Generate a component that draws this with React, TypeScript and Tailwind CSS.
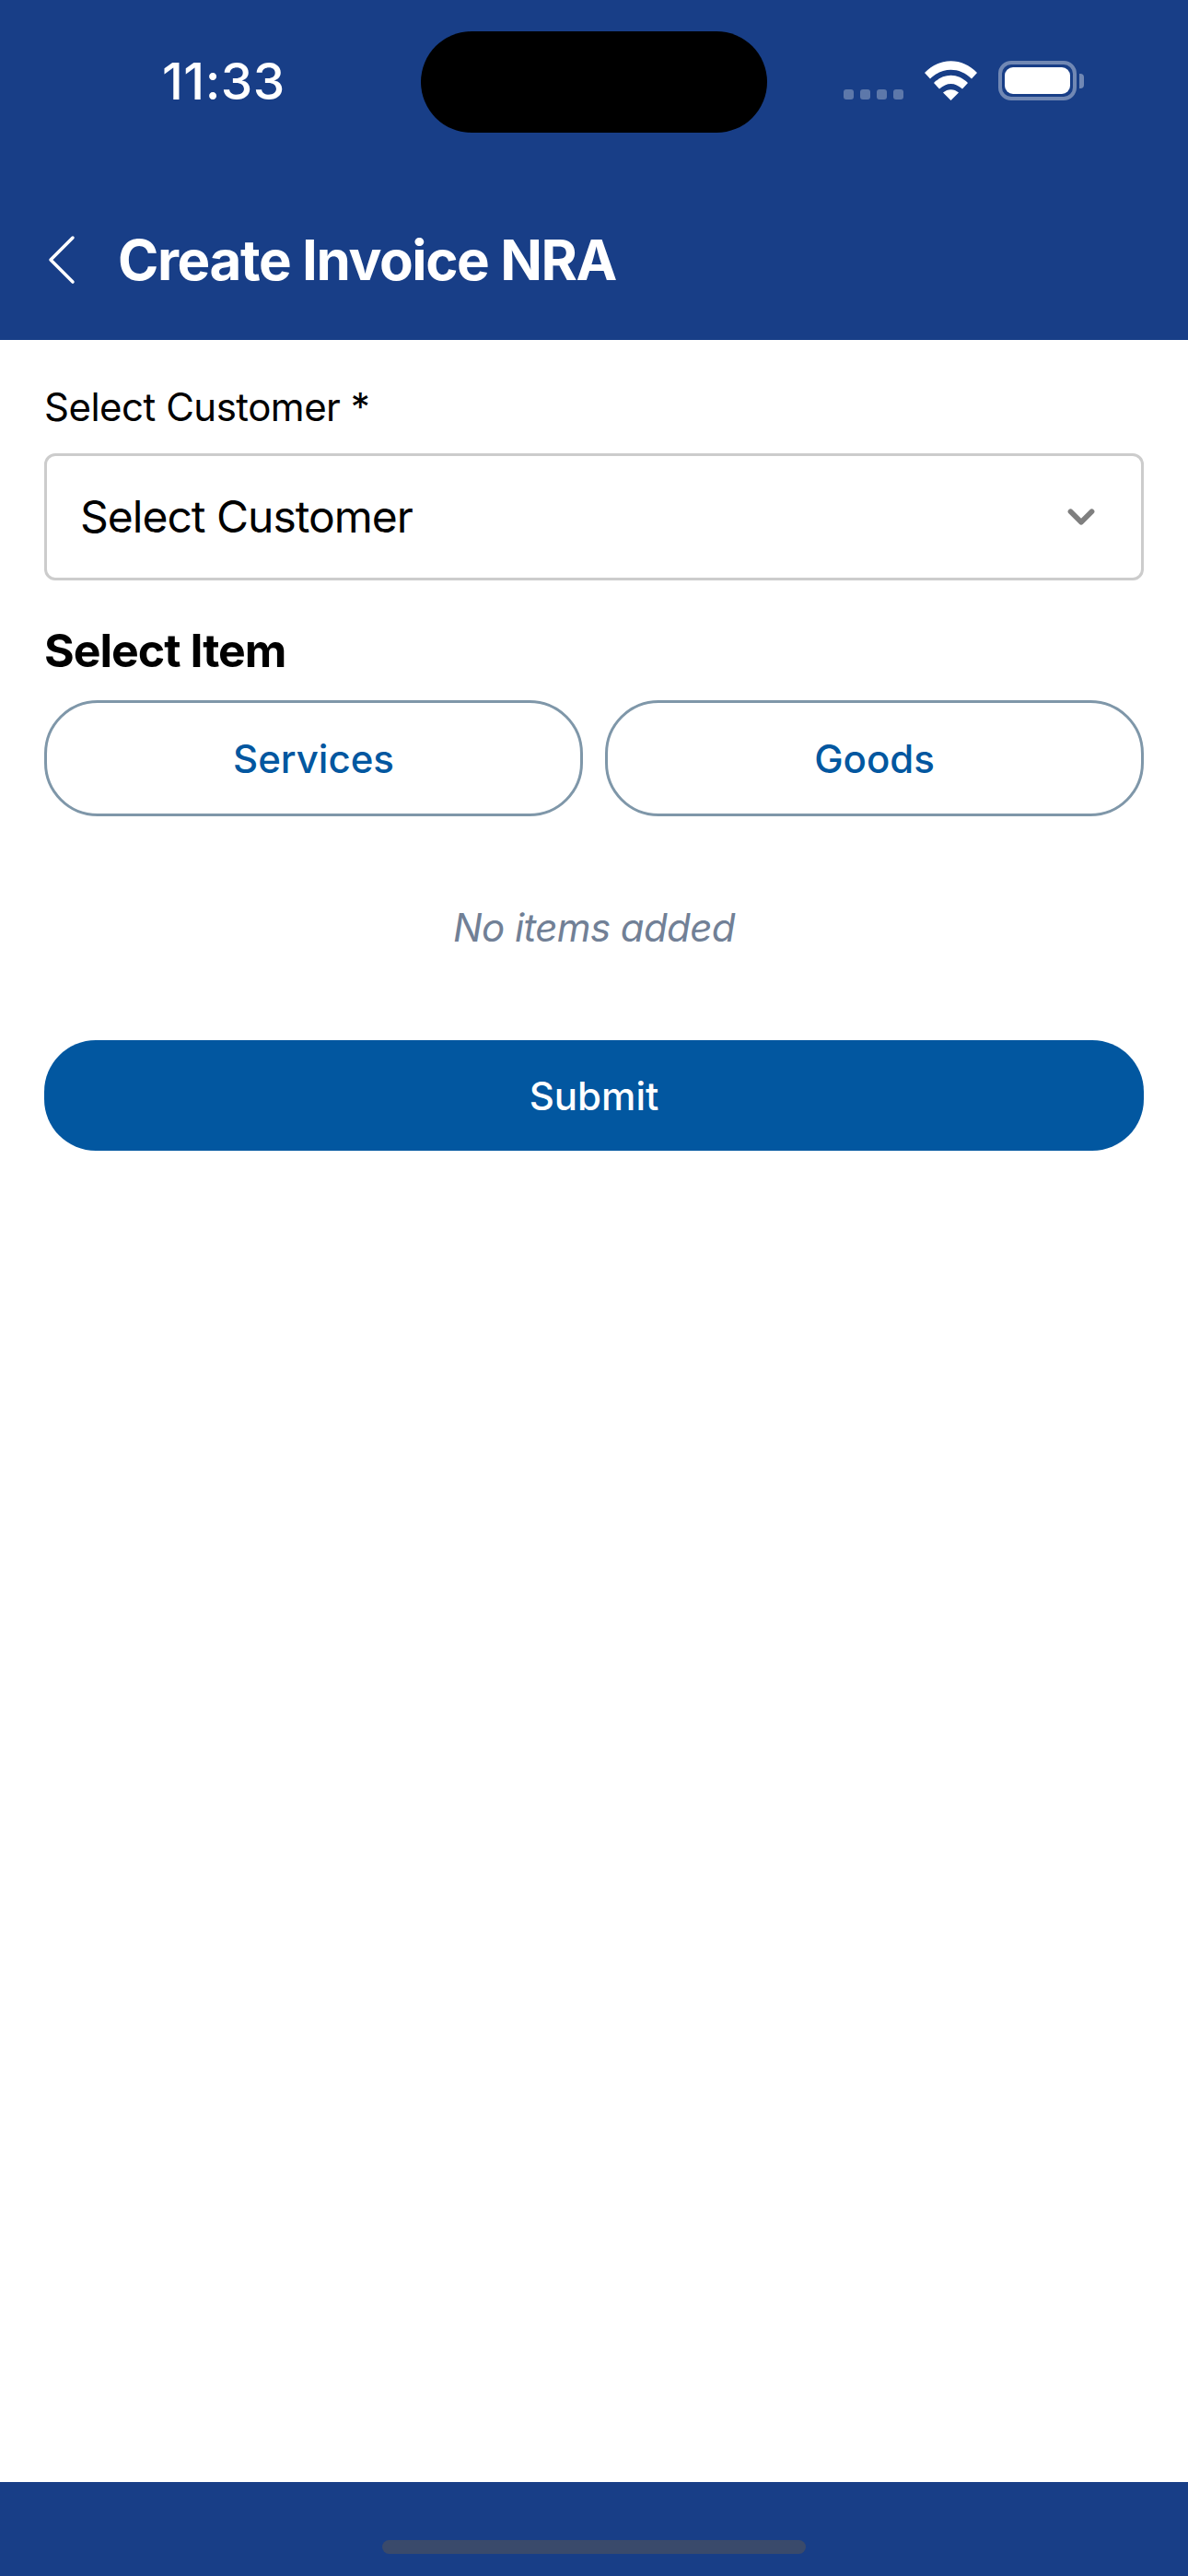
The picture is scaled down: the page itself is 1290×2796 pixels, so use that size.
import { ChevronDown } from "lucide-react"

function StatusBar() {
    return (
        <div className="flex items-center h-[110px] mt-[34px] pl-[176px]">
            <p className="text-[55px] font-medium text-white w-[281px] leading-none tracking-[0.5px] mb-[2px]">11:33</p>
            <div className="w-[376px] h-[110px] bg-black rounded-[55px]"></div>
            <div className="flex items-end ml-[83px] h-[43px] mb-[4px]">
                <div className="flex gap-[7px] mb-[1px]">
                    <div className="w-[11px] h-[11px] rounded-[3px] bg-[#5d78aa]"></div>
                    <div className="w-[11px] h-[11px] rounded-[3px] bg-[#5d78aa]"></div>
                    <div className="w-[11px] h-[11px] rounded-[3px] bg-[#5d78aa]"></div>
                    <div className="w-[11px] h-[11px] rounded-[3px] bg-[#5d78aa]"></div>
                </div>
                <svg className="ml-[23px]" width="57" height="43" viewBox="0 0 57 43" fill="#fff">
                    <path d="M0 13 C16 -4 41 -4 57 13 L51 19.5 C38 6.5 19 6.5 6 19.5 Z" />
                    <path d="M10 24 C21 13 36 13 47 24 L41 30.5 C33 23 24 23 16 30.5 Z" />
                    <path d="M20 34.5 C25 30 32 30 37 34.5 L28.5 43 Z" />
                </svg>
                <div className="ml-[23px] w-[85px] h-[43px] rounded-[14px] border-[4px] border-[#7188b4] p-[3px]">
                    <div className="w-full h-full bg-white rounded-[9px]"></div>
                </div>
                <div className="ml-[3px] mb-[13px] w-[5px] h-[16px] rounded-r-[4px] bg-[#7188b4]"></div>
            </div>
        </div>
    )
}

export default function App() {
    return (
        <div className="flex flex-col h-[2796px] bg-white font-['Inter',sans-serif]">
            <div className="bg-[#183e87] h-[369px]">
                <StatusBar />
                <div className="flex items-center mt-[108px] pl-[52px]">
                    <svg width="30" height="54" viewBox="0 0 30 54" fill="none" stroke="#fff" strokeWidth="3.5" strokeLinecap="round" strokeLinejoin="round">
                        <path d="M27 3 L3 27 L27 51" />
                    </svg>
                    <p className="text-[60px] font-bold text-white leading-none ml-[46px] tracking-[-1.4px]">Create Invoice NRA</p>
                </div>
            </div>

            <div className="px-[48px] flex flex-col">
                <p className="text-[42px] text-black leading-none mt-[52px] tracking-[-0.5px]">Select Customer *</p>
                <div className="flex items-center justify-between h-[138px] mt-[29px] border-[3px] border-[#cccccc] rounded-[12px] pl-[36px] pr-[48px]">
                    <p className="text-[48px] text-black leading-none tracking-[-1px]">Select Customer</p>
                    <ChevronDown className="text-[#7f7f7f] w-[46px] h-[46px] -mr-[6px]" strokeWidth={3} />
                </div>
                <p className="text-[50px] font-bold text-black leading-none mt-[51px] tracking-[-1px]">Select Item</p>
                <div className="flex gap-[24px] mt-[29px]">
                    <button className="flex-1 h-[126px] rounded-[58px] border-[3px] border-[#7f97a9] text-[#0257a0] text-[42px] font-medium">Services</button>
                    <button className="flex-1 h-[126px] rounded-[58px] border-[3px] border-[#7f97a9] text-[#0257a0] text-[42px] font-medium">Goods</button>
                </div>
                <p className="text-[42px] italic text-[#718096] text-center leading-none mt-[100px] tracking-[-0.6px]">No items added</p>
                <button className="h-[120px] mt-[101px] rounded-[56px] bg-[#0257a0] text-white text-[42px] font-medium">Submit</button>
            </div>

            <div className="flex-1"></div>

            <div className="h-[102px] bg-[#183e87] flex justify-center pt-[63px]">
                <div className="w-[460px] h-[15px] rounded-full bg-[#3a4a6b]"></div>
            </div>
        </div>
    )
}
